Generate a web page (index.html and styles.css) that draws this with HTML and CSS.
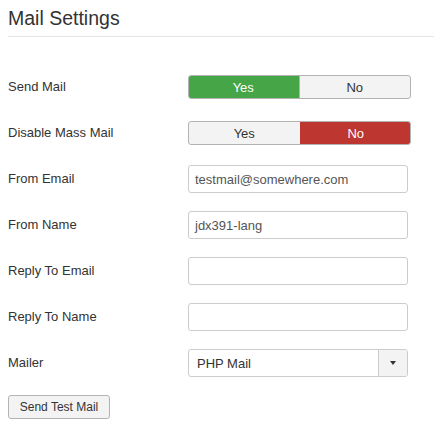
FILE: index.html
```html
<!DOCTYPE html>
<html>
<head>
<meta charset="utf-8">
<link rel="stylesheet" href="styles.css">
</head>
<body>
<div class="page">
  <h2 class="title">Mail Settings</h2>
  <div class="form">
    <div class="row">
      <div class="label">Send Mail</div>
      <div class="toggle">
        <span class="opt on-yes">Yes</span>
        <span class="opt">No</span>
      </div>
    </div>
    <div class="row">
      <div class="label">Disable Mass Mail</div>
      <div class="toggle">
        <span class="opt">Yes</span>
        <span class="opt on-no">No</span>
      </div>
    </div>
    <div class="row">
      <div class="label">From Email</div>
      <div class="input">testmail@somewhere.com</div>
    </div>
    <div class="row">
      <div class="label">From Name</div>
      <div class="input">jdx391-lang</div>
    </div>
    <div class="row">
      <div class="label">Reply To Email</div>
      <div class="input"></div>
    </div>
    <div class="row">
      <div class="label">Reply To Name</div>
      <div class="input"></div>
    </div>
    <div class="row">
      <div class="label">Mailer</div>
      <div class="select">
        <span class="select-text">PHP Mail</span>
        <span class="select-arrow"><span class="caret"></span></span>
      </div>
    </div>
    <div class="actions">
      <span class="btn">Send Test Mail</span>
    </div>
  </div>
</div>
</body>
</html>
```
FILE: styles.css
```css
html, body {
  margin: 0;
  padding: 0;
  background: #fff;
}
body {
  font-family: "Liberation Sans", Arial, sans-serif;
  font-size: 13px;
  color: #333;
}
.page {
  padding-left: 8px;
}
.title {
  margin: 0;
  padding-top: 7px;
  padding-bottom: 7px;
  font-size: 19.5px;
  line-height: 22px;
  font-weight: normal;
  color: #333;
  border-bottom: 1px solid #e5e5e5;
}
.form {
  padding-top: 36px;
}
.row {
  display: flex;
  align-items: center;
  height: 28px;
  margin-bottom: 18px;
}
.label {
  width: 180px;
  flex: none;
  line-height: 18px;
}
.toggle {
  display: flex;
  width: 223px;
  height: 24px;
  box-sizing: border-box;
  border: 1px solid #b3b3b3;
  border-radius: 3px;
  overflow: hidden;
  background: #f3f3f3;
}
.opt {
  flex: 1;
  display: flex;
  align-items: center;
  justify-content: center;
  color: #333;
}
.opt + .opt {
  border-left: 1px solid #b3b3b3;
}
.opt.on-yes {
  background: #46a546;
  color: #fff;
  margin: -1px 0 -1px -1px;
  border-radius: 3px 0 0 3px;
}
.opt.on-no {
  background: #bd362f;
  color: #fff;
  border-left-color: #bd362f;
  margin: -1px -1px -1px 0;
}
.input {
  width: 220px;
  height: 28px;
  box-sizing: border-box;
  border: 1px solid #ccc;
  border-radius: 3px;
  padding: 0 6px;
  display: flex;
  align-items: center;
  color: #555;
  background: #fff;
}
.select {
  width: 220px;
  height: 28px;
  box-sizing: border-box;
  border: 1px solid #ccc;
  border-radius: 3px;
  display: flex;
  background: #fff;
  overflow: hidden;
}
.select-text {
  flex: 1;
  display: flex;
  align-items: center;
  padding-left: 8px;
  color: #333;
}
.select-arrow {
  width: 28px;
  border-left: 1px solid #ccc;
  background: #f3f3f3;
  display: flex;
  align-items: center;
  justify-content: center;
}
.caret {
  width: 0;
  height: 0;
  border-left: 3.5px solid transparent;
  border-right: 3.5px solid transparent;
  border-top: 4px solid #333;
}
.actions {
  display: flex;
}
.btn {
  display: inline-flex;
  align-items: center;
  justify-content: center;
  box-sizing: border-box;
  width: 102px;
  height: 24px;
  font-size: 12px;
  color: #333;
  background: #f3f3f3;
  border: 1px solid #b3b3b3;
  border-radius: 3px;
}
```
